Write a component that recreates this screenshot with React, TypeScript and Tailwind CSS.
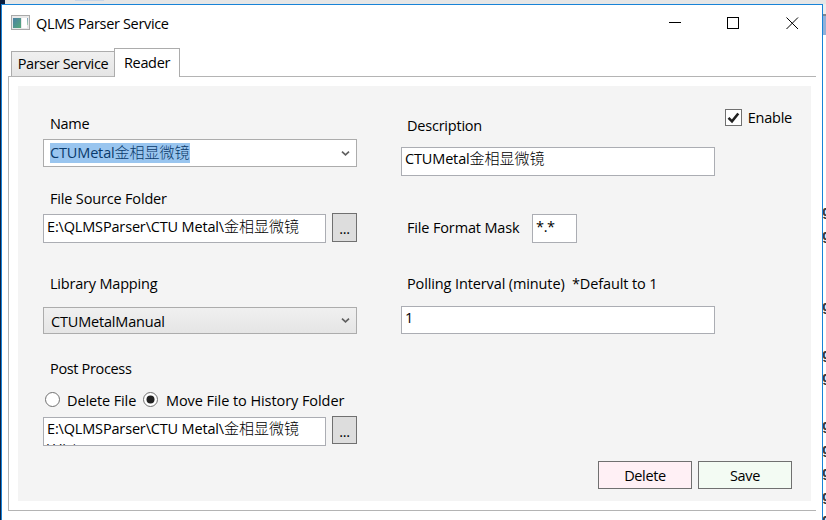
import React from 'react';

function T({ children, className = '' }: { children: React.ReactNode; className?: string }) {
  return <span className={`block h-5 whitespace-pre leading-5 ${className}`}>{children}</span>;
}

function Zh({ children }: { children: string }) {
  return <span className="text-[15px] font-light leading-none tracking-normal">{children}</span>;
}

function Chevron() {
  return (
    <svg width="9" height="7" viewBox="0 0 9 7" className="mr-[6px] shrink-0">
      <path d="M1 1.6 L4.5 4.8 L8 1.6" fill="none" stroke="#606060" strokeWidth="1.7" />
    </svg>
  );
}

function Browse({ className }: { className: string }) {
  return (
    <button className={`flex w-[25px] justify-center border border-[#707070] bg-[#dddddd] ${className}`}>
      <T>...</T>
    </button>
  );
}

function Radio({ checked = false }: { checked?: boolean }) {
  return (
    <svg width="16" height="16" viewBox="0 0 16 16" className="shrink-0">
      <circle cx="7.5" cy="7.5" r="7" fill="#fff" stroke="#707070" />
      {checked && <circle cx="7.5" cy="7.5" r="4" fill="#212121" />}
    </svg>
  );
}

const gaps = [
  'mt-[166px]', 'mt-[4px]', 'mt-[51px]', 'mt-[28px]', 'mt-[3px]',
  'mt-[28px]', 'mt-[4px]', 'mt-[3px]', 'mt-[4px]', 'mt-[3px]',
];

export default function App() {
  return (
    <div className="flex h-[520px] w-[826px] flex-col overflow-hidden bg-white font-['Open_Sans','Noto_Sans_CJK_SC',sans-serif] text-[14.5px] tracking-[-0.34px] text-black">
      <div className="flex h-1 shrink-0 bg-[#e6e6e6]">
        <div className="w-[5px] bg-[#0b1e40]" />
        <div className="ml-[70px] h-[1px] w-[29px] bg-[#c8d6e8]" />
      </div>
      <div className="flex h-[516px] shrink-0">
        <div className="w-px shrink-0 bg-[#0b1e40]" />
        <div className="flex w-[822px] shrink-0 flex-col border-x border-t border-[#1883d7] bg-white">
          <div className="flex h-[43px] shrink-0 items-start">
            <svg width="19" height="16" viewBox="0 0 19 16" className="ml-[9px] mt-[10px] shrink-0">
              <defs>
                <linearGradient id="pane" x1="0" y1="0" x2="1" y2="1">
                  <stop offset="0" stopColor="#4b7fa5" />
                  <stop offset="1" stopColor="#55aa78" />
                </linearGradient>
                <linearGradient id="side" x1="0" y1="0" x2="0" y2="1">
                  <stop offset="0" stopColor="#7d9fc0" />
                  <stop offset="1" stopColor="#a9d3ad" />
                </linearGradient>
              </defs>
              <rect x="0.5" y="0.5" width="18" height="14" fill="#e9e9e9" stroke="#a9a9a9" />
              <rect x="2" y="3" width="8" height="10" fill="url(#pane)" />
              <rect x="11" y="3" width="5" height="10" fill="#fff" />
              <rect x="16" y="3" width="1" height="7" fill="url(#side)" />
            </svg>
            <T className="ml-[6px] mt-[9px]">QLMS Parser Service</T>
            <svg width="130" height="13" viewBox="0 0 130 13" className="ml-auto mr-[23px] mt-[12px] shrink-0" fill="none" stroke="#000">
              <path d="M0 5.5H12" />
              <rect x="58.5" y="0.5" width="11" height="11" />
              <path d="M117.5 0.5L129 12M129 0.5L117.5 12" />
            </svg>
          </div>
          <div className="flex h-[28px] shrink-0 items-end pl-[9px]">
            <div className="flex h-[25px] w-[103px] justify-center border border-b-0 border-r-0 border-[#acacac] bg-gradient-to-b from-[#f0f0f0] to-[#e5e5e5]">
              <T className="mt-[2px]">Parser Service</T>
            </div>
            <div className="relative z-10 -mb-px flex h-[29px] w-[66px] justify-center border border-b-0 border-[#acacac] bg-white">
              <T className="mt-[4px]">Reader</T>
            </div>
          </div>
          <div className="ml-[6px] h-[435px] w-[808px] shrink-0 border-y border-l border-[#b4b4b4] pl-[9px] pt-[9px]">
            <div className="flex h-[415px] w-[793px] items-start bg-[#f4f4f4]">
              <div className="ml-[25px] flex w-[314px] flex-col">
                <T className="ml-[7px] mt-[28px]">Name</T>
                <div className="mt-[5px] flex h-[28px] items-center border border-[#acacac] bg-white pl-[6px]">
                  <T className="bg-[#99c5ef] tracking-[-0.15px] text-[#0a3a6b]">CTUMetal<Zh>金相显微镜</Zh></T>
                  <div className="ml-auto flex"><Chevron /></div>
                </div>
                <T className="ml-[7px] mt-[22px] tracking-[-0.17px]">File Source Folder</T>
                <div className="mt-[4px] flex justify-between">
                  <div className="mt-px h-[29px] w-[283px] overflow-hidden border border-[#abadb3] bg-white pl-[3px]">
                    <T className="mt-[2px] tracking-[-0.16px]">E:\QLMSParser\CTU Metal\<Zh>金相显微镜</Zh></T>
                  </div>
                  <Browse className="h-[29px] pt-[5px]" />
                </div>
                <T className="ml-[7px] mt-[31px] tracking-[-0.2px]">Library Mapping</T>
                <div className="mt-[13px] flex h-[27px] items-center border border-[#acacac] bg-gradient-to-b from-[#f0f0f0] to-[#e5e5e5] pl-[7px]">
                  <T className="mt-[2px] tracking-[-0.18px]">CTUMetalManual</T>
                  <div className="ml-auto flex"><Chevron /></div>
                </div>
                <T className="ml-[7px] mt-[25px]">Post Process</T>
                <div className="ml-[2px] mt-[11px] flex h-5 items-center">
                  <Radio />
                  <T className="ml-[6px] mt-px w-[76px] tracking-[-0.12px]">Delete File</T>
                  <Radio checked />
                  <T className="ml-[7px] mt-px tracking-[-0.07px]">Move File to History Folder</T>
                </div>
                <div className="mt-[6px] flex items-start justify-between">
                  <div className="mt-px h-[29px] w-[283px] overflow-hidden border border-[#abadb3] bg-white pl-[3px]">
                    <T className="mt-px tracking-[-0.16px]">E:\QLMSParser\CTU Metal\<Zh>金相显微镜</Zh></T>
                    <T>\Hist</T>
                  </div>
                  <Browse className="h-[28px] pt-[5px]" />
                </div>
              </div>
              <div className="ml-[44px] flex w-[391px] flex-col">
                <div className="flex items-start">
                  <T className="ml-[6px] mt-[30px] w-[318px] tracking-[-0.22px]">Description</T>
                  <div className="mt-[23px] flex h-[17px] w-[17px] items-center justify-center border border-[#707070] bg-white">
                    <svg width="13" height="13" viewBox="0 0 13 13">
                      <path d="M1.5 6.8L5 10.3L11.3 2.5" fill="none" stroke="#212121" strokeWidth="2.6" />
                    </svg>
                  </div>
                  <T className="ml-[6px] mt-[22px] tracking-[-0.25px]">Enable</T>
                </div>
                <div className="mt-[11px] h-[29px] w-[314px] border border-[#abadb3] bg-white pl-[3px]">
                  <T className="mt-px tracking-[-0.15px]">CTUMetal<Zh>金相显微镜</Zh></T>
                </div>
                <div className="mt-[38px] flex h-[29px] items-start">
                  <T className="ml-[6px] mt-[4px] w-[125px] tracking-[-0.15px]">File Format Mask</T>
                  <div className="h-[29px] w-[45px] border border-[#abadb3] bg-white pl-[3px]">
                    <T className="mt-[2px]">*.*</T>
                  </div>
                </div>
                <T className="ml-[6px] mt-[31px] tracking-[-0.12px]">Polling Interval (minute)  *Default to 1</T>
                <div className="mt-[12px] h-[28px] w-[314px] border border-[#abadb3] bg-white pl-[3px]">
                  <T className="mt-px">1</T>
                </div>
                <div className="mt-[127px] flex justify-end gap-[6px]">
                  <button className="flex h-[28px] w-[94px] justify-center border border-[#707070] bg-[#fff0f5] pt-[4px]"><T>Delete</T></button>
                  <button className="flex h-[28px] w-[94px] justify-center border border-[#707070] bg-[#f3fbf3] pt-[4px]"><T>Save</T></button>
                </div>
              </div>
            </div>
          </div>
        </div>
        <div className="flex w-[3px] shrink-0 flex-col overflow-hidden bg-white">
          <div className="h-[10px] shrink-0 bg-[#eeeeee]" />
          <div className="h-[21px] shrink-0 border-t-2 border-[#808890] bg-[#92b0d8]" />
          {gaps.map((gap, i) => (
            <span key={i} className={`-ml-[1px] block h-5 shrink-0 font-['Liberation_Sans'] text-[15px] font-bold leading-5 text-[#3a3a3a] ${gap}`}>g</span>
          ))}
        </div>
      </div>
    </div>
  );
}
